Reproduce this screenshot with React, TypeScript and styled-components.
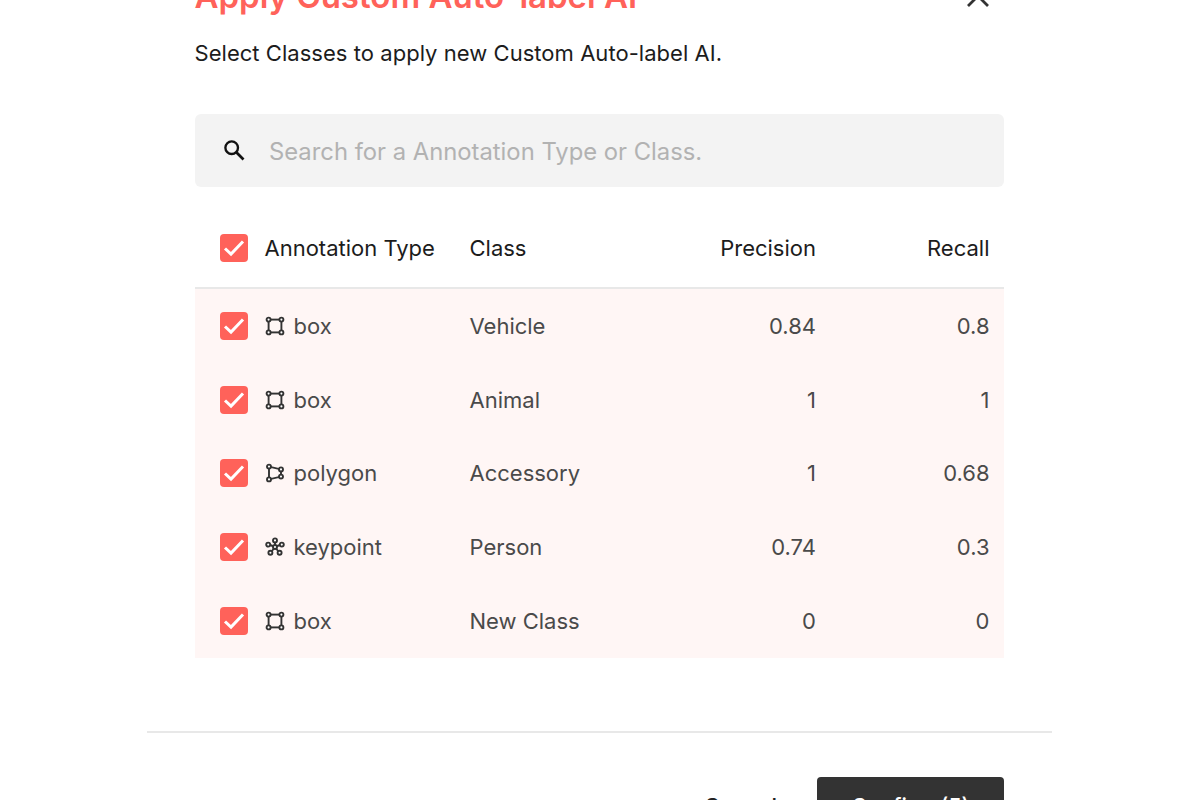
import React from "react";
import styled, { createGlobalStyle } from "styled-components";

const GlobalStyle = createGlobalStyle`
  html, body {
    margin: 0;
    height: 800px;
    overflow: hidden;
    background: #ffffff;
    font-family: Inter, "Noto Sans", sans-serif;
  }
`;

const rows = [
  { type: "box", name: "Vehicle", precision: "0.84", recall: "0.8" },
  { type: "box", name: "Animal", precision: "1", recall: "1" },
  { type: "polygon", name: "Accessory", precision: "1", recall: "0.68" },
  { type: "keypoint", name: "Person", precision: "0.74", recall: "0.3" },
  { type: "box", name: "New Class", precision: "0", recall: "0" },
];

const CheckBox = () => (
  <StyledCheck>
    <svg width="28" height="28" viewBox="0 0 28 28" fill="none">
      <path d="M5 14.5l6 5.6L23 7.5" stroke="#fff" strokeWidth="3" />
    </svg>
  </StyledCheck>
);

const TypeIcon = ({ type }: { type: string }) => {
  const stroke = { stroke: "#333", strokeWidth: 1.9, fill: "none" };
  if (type === "polygon") {
    return (
      <svg width="20" height="20" viewBox="0 0 20 20">
        <path d="M4 3.6L16 6.4V13.6L4 16.4Z" {...stroke} />
        <circle cx="4" cy="3.6" r="2" {...stroke} fill="#fff" />
        <circle cx="16" cy="6.4" r="2" {...stroke} fill="#fff" />
        <circle cx="16" cy="13.6" r="2" {...stroke} fill="#fff" />
        <circle cx="4" cy="16.4" r="2" {...stroke} fill="#fff" />
      </svg>
    );
  }
  if (type === "keypoint") {
    return (
      <svg width="20" height="20" viewBox="0 0 20 20">
        <path d="M10 10V4M10 10L4 7.5M10 10L16 7.5M10 10L5.8 15.5M10 10L14.2 15.5" {...stroke} />
        <circle cx="10" cy="10" r="2" {...stroke} fill="#fff" />
        <circle cx="10" cy="3.4" r="2" {...stroke} fill="#fff" />
        <circle cx="3.2" cy="7.6" r="2" {...stroke} fill="#fff" />
        <circle cx="16.8" cy="7.6" r="2" {...stroke} fill="#fff" />
        <circle cx="5.4" cy="15.8" r="2" {...stroke} fill="#fff" />
        <circle cx="14.6" cy="15.8" r="2" {...stroke} fill="#fff" />
      </svg>
    );
  }
  return (
    <svg width="20" height="20" viewBox="0 0 20 20">
      <rect x="3.6" y="3.6" width="12.8" height="12.8" {...stroke} />
      <circle cx="3.6" cy="3.6" r="2" {...stroke} fill="#fff" />
      <circle cx="16.4" cy="3.6" r="2" {...stroke} fill="#fff" />
      <circle cx="3.6" cy="16.4" r="2" {...stroke} fill="#fff" />
      <circle cx="16.4" cy="16.4" r="2" {...stroke} fill="#fff" />
    </svg>
  );
};

const App = () => {
  return (
    <Dialog>
      <GlobalStyle />
      <Body>
        <TitleRow>
          <Title>Apply Custom Auto-label AI</Title>
          <CloseIcon width="24" height="24" viewBox="0 0 24 24" fill="none">
            <path d="M2 1l20 20M22 1L2 21" stroke="#333" strokeWidth="2.8" />
          </CloseIcon>
        </TitleRow>
        <Subtitle>Select Classes to apply new Custom Auto-label AI.</Subtitle>
        <Search>
          <svg width="27" height="27" viewBox="0 0 24 24" fill="none">
            <circle cx="9.5" cy="9.5" r="5.6" stroke="#111" strokeWidth="2.1" />
            <path d="M13.6 13.6L20 20" stroke="#111" strokeWidth="2.4" />
          </svg>
          <Placeholder>Search for a Annotation Type or Class.</Placeholder>
        </Search>
        <HeaderRow>
          <CheckBox />
          <TypeCell>Annotation Type</TypeCell>
          <ClassCell>Class</ClassCell>
          <NumCell>Precision</NumCell>
          <RecallCell>Recall</RecallCell>
        </HeaderRow>
        <RowList>
          {rows.map((row, i) => (
            <Row key={i}>
              <CheckBox />
              <TypeCell>
                <TypeIcon type={row.type} />
                <span>{row.type}</span>
              </TypeCell>
              <ClassCell>{row.name}</ClassCell>
              <NumCell>{row.precision}</NumCell>
              <RecallCell>{row.recall}</RecallCell>
            </Row>
          ))}
        </RowList>
      </Body>
      <Footer>
        <CancelButton>Cancel</CancelButton>
        <ConfirmButton>Confirm (5)</ConfirmButton>
      </Footer>
    </Dialog>
  );
};

const Dialog = styled.div`
  width: 905.5px;
  margin: -20px 0 0 146.5px;
`;

const Body = styled.div`
  padding: 0 48px 73px;
  border-bottom: 2px solid #e8e8e8;
`;

const TitleRow = styled.div`
  display: flex;
  align-items: center;
  justify-content: space-between;
  height: 38px;
  padding-right: 14px;
`;

const Title = styled.div`
  margin-bottom: 7px;
  font-size: 33px;
  font-weight: 600;
  color: #ff625a;
`;

const CloseIcon = styled.svg`
  display: block;
  margin-bottom: 4px;
`;

const Subtitle = styled.div`
  margin-top: 18.5px;
  font-size: 22px;
  line-height: 32px;
  letter-spacing: 0.04px;
  color: #1c1c1c;
`;

const Search = styled.div`
  display: flex;
  align-items: center;
  gap: 21.5px;
  height: 73px;
  margin-top: 45.5px;
  padding-left: 26px;
  background: #f3f3f3;
  border-radius: 6px;
  box-sizing: border-box;
`;

const Placeholder = styled.span`
  padding-top: 2px;
  font-size: 23.8px;
  color: #b2b2b2;
`;

const StyledCheck = styled.div`
  display: flex;
  align-items: center;
  justify-content: center;
  flex: none;
  width: 28px;
  height: 28px;
  border-radius: 4px;
  background: #ff625a;
`;

const HeaderRow = styled.div`
  display: flex;
  align-items: center;
  height: 79px;
  margin-top: 23px;
  padding: 0 14.5px 2px 25px;
  border-bottom: 2px solid #e8e8e8;
  box-sizing: border-box;
  font-size: 22px;
  color: #1c1c1c;
`;

const RowList = styled.div`
  background: #fff6f5;
`;

const Row = styled.div`
  display: flex;
  align-items: center;
  height: 73.8px;
  padding: 0 14.5px 0 25px;
  font-size: 22px;
  color: #4a4a4a;
`;

const TypeCell = styled.div`
  display: flex;
  align-items: center;
  gap: 9px;
  width: 205px;
  margin-left: 17px;
  box-sizing: border-box;
`;

const ClassCell = styled.div`
  width: 200px;
`;

const NumCell = styled.div`
  width: 146.5px;
  text-align: right;
`;

const RecallCell = styled.div`
  flex: 1;
  text-align: right;
`;

const Footer = styled.div`
  display: flex;
  justify-content: flex-end;
  align-items: flex-start;
  gap: 40px;
  padding: 44px 48px 0 0;
`;

const CancelButton = styled.div`
  padding-top: 16px;
  font-size: 22px;
  font-weight: 500;
  color: #222;
`;

const ConfirmButton = styled.div`
  display: flex;
  justify-content: center;
  width: 187px;
  height: 60px;
  padding-top: 16px;
  box-sizing: border-box;
  border-radius: 4px;
  background: #333333;
  color: #fff;
  font-size: 21.5px;
  font-weight: 500;
`;

export default App;
